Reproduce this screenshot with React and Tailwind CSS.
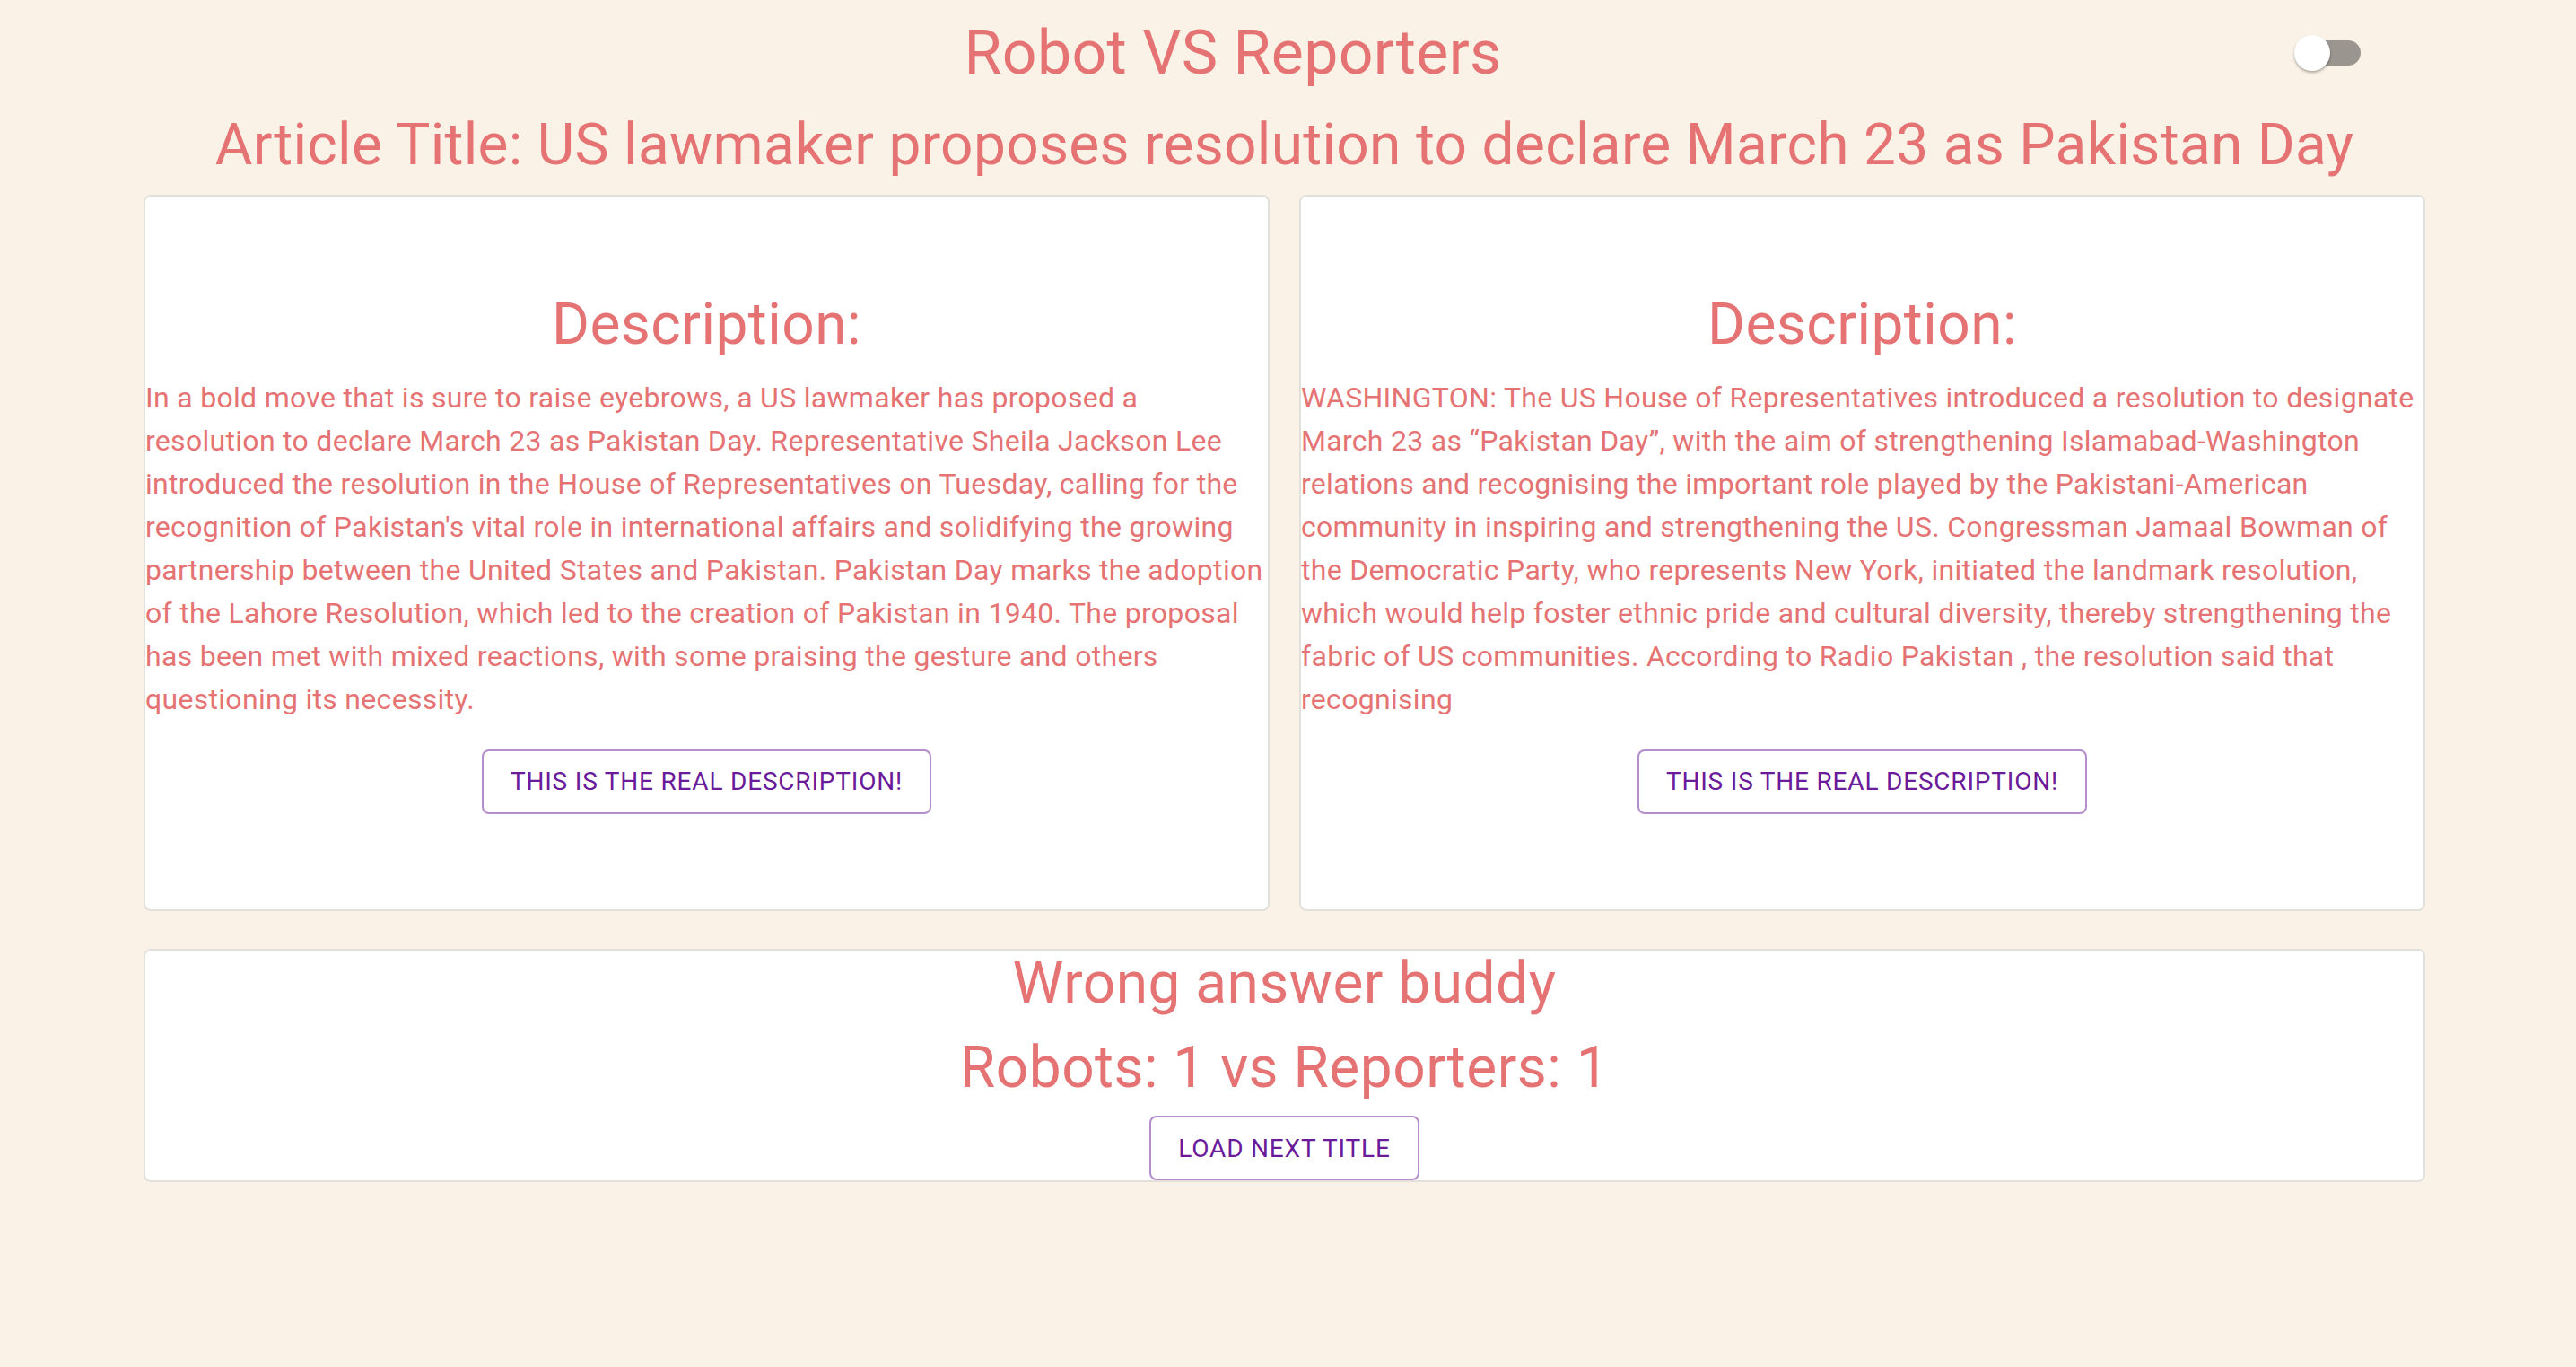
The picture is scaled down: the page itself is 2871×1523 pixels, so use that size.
import { useState } from 'react';

const descriptions = [
  "In a bold move that is sure to raise eyebrows, a US lawmaker has proposed a resolution to declare March 23 as Pakistan Day. Representative Sheila Jackson Lee introduced the resolution in the House of Representatives on Tuesday, calling for the recognition of Pakistan's vital role in international affairs and solidifying the growing partnership between the United States and Pakistan. Pakistan Day marks the adoption of the Lahore Resolution, which led to the creation of Pakistan in 1940. The proposal has been met with mixed reactions, with some praising the gesture and others questioning its necessity.",
  'WASHINGTON: The US House of Representatives introduced a resolution to designate March 23 as \u201cPakistan Day\u201d, with the aim of strengthening Islamabad-Washington relations and recognising the important role played by the Pakistani-American community in inspiring and strengthening the US. Congressman Jamaal Bowman of the Democratic Party, who represents New York, initiated the landmark resolution, which would help foster ethnic pride and cultural diversity, thereby strengthening the fabric of US communities. According to Radio Pakistan , the resolution said that recognising',
];

const OutlinedButton = ({ children, onClick }) => (
  <button
    onClick={onClick}
    className="flex h-[72px] items-center rounded-lg border-2 border-[#6a1b9a80] bg-white px-[30px] text-[28px] font-normal uppercase leading-[49px] tracking-[0.8px] text-[#6a1b9a] hover:bg-[#6a1b9a0a]"
  >
    {children}
  </button>
);

const DescriptionCard = ({ text, onPick }) => (
  <div className="flex h-[798px] flex-col justify-center rounded-lg border-2 border-[#e2e0dc] bg-white pb-[4px]">
    <h3 className="text-center text-[64px] leading-[79px] tracking-[0.47px]">Description:</h3>
    <p className="mt-[18px] text-[32px] leading-[48px] tracking-[0.3px]">{text}</p>
    <div className="mt-[32px] flex justify-center">
      <OutlinedButton onClick={onPick}>This is the real description!</OutlinedButton>
    </div>
  </div>
);

const App = () => {
  const [dark, setDark] = useState(false);
  const [score, setScore] = useState({ robots: 1, reporters: 1 });

  return (
    <div className="min-h-[1523px] bg-[#faf2e6] pt-[17px] font-['Roboto',sans-serif] text-[#e57373]">
      <header className="relative">
        <h1 className="w-[2748px] text-center text-[68px] leading-[84px] tracking-[0.3px]">Robot VS Reporters</h1>
        <button
          onClick={() => setDark((v) => !v)}
          className="absolute left-[2557px] top-[22px] h-[40px] w-[74px]"
          aria-label="toggle theme"
        >
          <span className="absolute left-[6px] top-[6px] h-[28px] w-[68px] rounded-full bg-[#9a958e]" />
          <span
            className={
              dark
                ? 'absolute left-[34px] top-0 h-[40px] w-[40px] rounded-full bg-white shadow-[0_2px_3px_rgba(0,0,0,0.3)]'
                : 'absolute left-0 top-0 h-[40px] w-[40px] rounded-full bg-white shadow-[0_2px_3px_rgba(0,0,0,0.3)]'
            }
          />
        </button>
      </header>

      <main className="ml-[160px] w-[2543px]">
        <h2 className="mt-[21px] text-center text-[64px] leading-[79px] tracking-[0.3px]">
          Article Title: US lawmaker proposes resolution to declare March 23 as Pakistan Day
        </h2>

        <div className="mt-[16px] grid grid-cols-2 gap-[33px]">
          {descriptions.map((text, i) => (
            <DescriptionCard key={i} text={text} onPick={() => setScore((s) => ({ ...s }))} />
          ))}
        </div>

        <div className="mt-[42px] flex h-[260px] flex-col items-center rounded-lg border-2 border-[#e2e0dc] bg-white">
          <h3 className="-mt-[3px] text-center text-[64px] leading-[79px] tracking-[0.47px]">Wrong answer buddy</h3>
          <h3 className="mt-[15px] text-center text-[64px] leading-[79px] tracking-[0.47px]">
            Robots: {score.robots} vs Reporters: {score.reporters}
          </h3>
          <div className="mt-[14px]">
            <OutlinedButton>Load next title</OutlinedButton>
          </div>
        </div>
      </main>
    </div>
  );
};

export default App;
